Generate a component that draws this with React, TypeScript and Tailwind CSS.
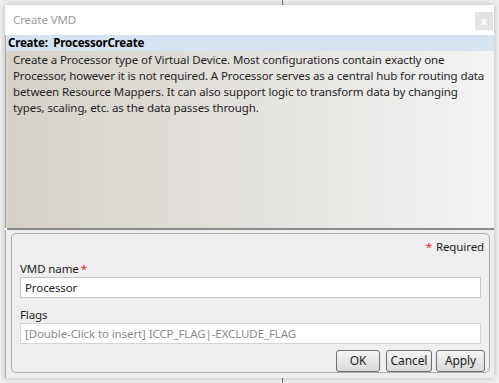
import React from "react";

export default function App() {
  return (
    <div className="relative w-[499px] h-[383px] bg-[#f0f0f0] overflow-hidden font-['Noto_Sans',sans-serif] text-[12px] leading-[16px] text-[#1e1e1e]">
      <div className="absolute left-[282px] top-0 w-[1px] h-[383px] bg-[#6e6e6e]" />
      <div className="relative p-[5px] h-full">
        <div className="flex flex-col w-[489px] h-[373px] bg-white shadow-[0_0_6px_rgba(0,0,0,0.25)]">
          {/* title bar */}
          <div className="flex h-[30px] items-start justify-between">
            <div className="pl-[8px] pt-[7px] text-[#9a9a9a] text-[11.5px] tracking-[-0.1px]">Create VMD</div>
            <div className="mt-[7px] mr-[1px] w-[18px] h-[18px] bg-[#e3e3e3] flex items-center justify-center text-white text-[10px] font-bold leading-none">x</div>
          </div>
          {/* header */}
          <div className="h-[16px] bg-[#d7e3f0] pl-[2px] font-bold text-[11.5px] leading-[16px] text-black whitespace-pre border-l border-[#a9a9a9] tracking-[-0.2px]">
            {"Create:  ProcessorCreate"}
          </div>
          {/* description */}
          <div className="h-[180px] bg-gradient-to-r from-[#d5d1c9] to-[#f3f3f3] border-l border-[#a9a9a9] pl-[7px] pt-[1px] text-[11.5px] leading-[16px] text-[#1e1e1e] tracking-[-0.1px]">
            <div>Create a Processor type of Virtual Device. Most configurations contain exactly one</div>
            <div>Processor, however it is not required. A Processor serves as a central hub for routing data</div>
            <div>between Resource Mappers. It can also support logic to transform data by changing</div>
            <div>types, scaling, etc. as the data passes through.</div>
          </div>
          {/* splitter */}
          <div className="h-[2px] bg-[#8a8a8a] ml-[2px]" />
          {/* lower */}
          <div className="flex-1 bg-[#eeeeee] pl-[5px] pr-[4px] pt-[3px] pb-[5px] border-l border-[#a9a9a9]">
            <div className="h-full rounded-[5px] border border-[#acacac] bg-[#eeeeee] flex flex-col pl-[8px] pr-[8px] text-[11.5px] tracking-[-0.1px]">
              <div className="flex justify-end pt-[5px] h-[24px] leading-[16px]">
                <span className="text-[#e02020] mr-[4px]">*</span>
                <span className="text-[#1e1e1e] mr-[-3px]">Required</span>
              </div>
              <div className="pt-[3px] leading-[16px]">
                VMD name<span className="text-[#e02020] ml-[2px]">*</span>
              </div>
              <div className="h-[21px] bg-white border border-[#c8c8c8] pl-[4px] leading-[19px] text-[#1e1e1e]">Processor</div>
              <div className="pt-[9px] leading-[16px]">Flags</div>
              <div className="h-[21px] bg-white border border-[#d4d4d4] pl-[4px] leading-[19px] text-[#8a8a8a]">[Double-Click to insert] ICCP_FLAG|-EXCLUDE_FLAG</div>
              <div className="flex justify-end pt-[6px] mr-[-4px]">
                <button className="w-[44px] h-[22px] rounded-[3px] border border-[#707070] bg-gradient-to-b from-[#f3f3f3] to-[#dadada] text-[12px] leading-[18px] text-[#1e1e1e]">OK</button>
                <button className="ml-[6px] w-[46px] h-[22px] rounded-[3px] border border-[#707070] bg-gradient-to-b from-[#f3f3f3] to-[#dadada] text-[12px] leading-[18px] text-[#1e1e1e]">Cancel</button>
                <button className="ml-[4px] w-[49px] h-[22px] rounded-[3px] border border-[#707070] bg-gradient-to-b from-[#f3f3f3] to-[#dadada] text-[12px] leading-[18px] text-[#1e1e1e]">Apply</button>
              </div>
            </div>
          </div>
        </div>
      </div>
    </div>
  );
}
